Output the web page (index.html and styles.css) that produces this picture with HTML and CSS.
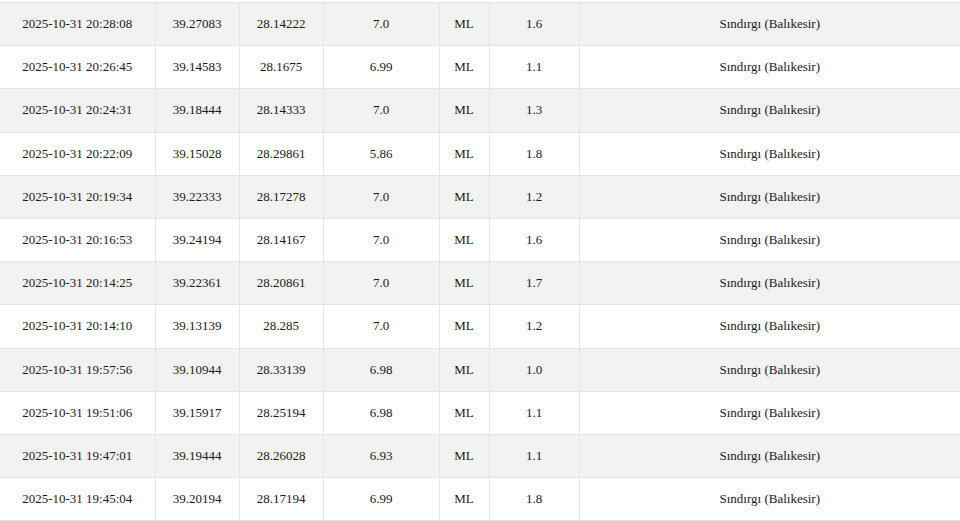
FILE: index.html
```html
<!DOCTYPE html>
<html lang="tr">
<head>
<meta charset="utf-8">
<title>Depremler</title>
<link rel="stylesheet" href="styles.css">
</head>
<body>
<table class="quakes">
<colgroup>
<col class="c-date"><col class="c-lat"><col class="c-lon"><col class="c-depth"><col class="c-type"><col class="c-mag"><col class="c-place">
</colgroup>
<tbody>
<tr><td>2025-10-31 20:28:08</td><td>39.27083</td><td>28.14222</td><td>7.0</td><td>ML</td><td>1.6</td><td>Sındırgı (Balıkesir)</td></tr>
<tr><td>2025-10-31 20:26:45</td><td>39.14583</td><td>28.1675</td><td>6.99</td><td>ML</td><td>1.1</td><td>Sındırgı (Balıkesir)</td></tr>
<tr><td>2025-10-31 20:24:31</td><td>39.18444</td><td>28.14333</td><td>7.0</td><td>ML</td><td>1.3</td><td>Sındırgı (Balıkesir)</td></tr>
<tr><td>2025-10-31 20:22:09</td><td>39.15028</td><td>28.29861</td><td>5.86</td><td>ML</td><td>1.8</td><td>Sındırgı (Balıkesir)</td></tr>
<tr><td>2025-10-31 20:19:34</td><td>39.22333</td><td>28.17278</td><td>7.0</td><td>ML</td><td>1.2</td><td>Sındırgı (Balıkesir)</td></tr>
<tr><td>2025-10-31 20:16:53</td><td>39.24194</td><td>28.14167</td><td>7.0</td><td>ML</td><td>1.6</td><td>Sındırgı (Balıkesir)</td></tr>
<tr><td>2025-10-31 20:14:25</td><td>39.22361</td><td>28.20861</td><td>7.0</td><td>ML</td><td>1.7</td><td>Sındırgı (Balıkesir)</td></tr>
<tr><td>2025-10-31 20:14:10</td><td>39.13139</td><td>28.285</td><td>7.0</td><td>ML</td><td>1.2</td><td>Sındırgı (Balıkesir)</td></tr>
<tr><td>2025-10-31 19:57:56</td><td>39.10944</td><td>28.33139</td><td>6.98</td><td>ML</td><td>1.0</td><td>Sındırgı (Balıkesir)</td></tr>
<tr><td>2025-10-31 19:51:06</td><td>39.15917</td><td>28.25194</td><td>6.98</td><td>ML</td><td>1.1</td><td>Sındırgı (Balıkesir)</td></tr>
<tr><td>2025-10-31 19:47:01</td><td>39.19444</td><td>28.26028</td><td>6.93</td><td>ML</td><td>1.1</td><td>Sındırgı (Balıkesir)</td></tr>
<tr><td>2025-10-31 19:45:04</td><td>39.20194</td><td>28.17194</td><td>6.99</td><td>ML</td><td>1.8</td><td>Sındırgı (Balıkesir)</td></tr>
</tbody>
</table>
</body>
</html>
```
FILE: styles.css
```css
html, body {
  margin: 0;
  padding: 0;
  background: #ffffff;
}
body {
  font-family: "Liberation Serif", "Times New Roman", serif;
  font-size: 13px;
  color: #1a1a1a;
  overflow: hidden;
}
.quakes {
  width: 960px;
  border-collapse: collapse;
  table-layout: fixed;
  margin-top: 2px;
}
.c-date { width: 155px; }
.c-lat { width: 84px; }
.c-lon { width: 84px; }
.c-depth { width: 116px; }
.c-type { width: 50px; }
.c-mag { width: 90px; }
.c-place { width: 381px; }
.quakes td {
  border: 1px solid #e4e4e4;
  text-align: center;
  padding: 12px 4px;
  line-height: 18.2px;
  white-space: nowrap;
}
.quakes td:last-child { border-right: none; }
.quakes td:first-child { border-left: none; }
.quakes tr:nth-child(odd) td { background: #f2f2f2; }
.quakes tr:nth-child(even) td { background: #ffffff; }
```
